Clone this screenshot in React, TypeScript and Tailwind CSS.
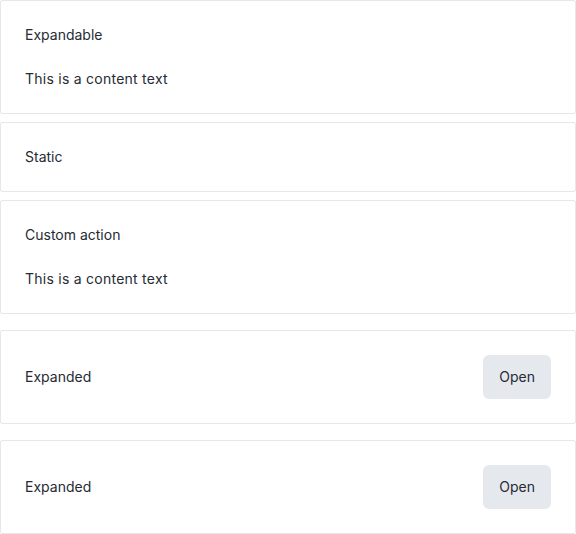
const Card = ({ title, content, action }: { title: string; content?: string; action?: boolean }) => {
  return (
    <div className="rounded-xs border border-[#e5e7eb] bg-white p-6">
      <div className="flex items-center justify-between">
        <span className="text-sm leading-5 text-[#262b33]">{title}</span>
        {action && (
          <button className="h-11 rounded-md bg-[#e5e9ee] px-4 text-sm text-[#262b33]">
            Open
          </button>
        )}
      </div>
      {content && (
        <p className="mt-6 text-sm leading-5 tracking-[0.25px] text-[#262b33]">{content}</p>
      )}
    </div>
  );
};

export default function App() {
  return (
    <div className="flex w-[576px] flex-col bg-white font-['Inter',sans-serif]">
      <div className="flex flex-col gap-2">
        <Card title="Expandable" content="This is a content text" />
        <Card title="Static" />
        <Card title="Custom action" content="This is a content text" />
      </div>
      <div className="mt-4 flex flex-col gap-4">
        <Card title="Expanded" action />
        <Card title="Expanded" action />
      </div>
    </div>
  );
}
